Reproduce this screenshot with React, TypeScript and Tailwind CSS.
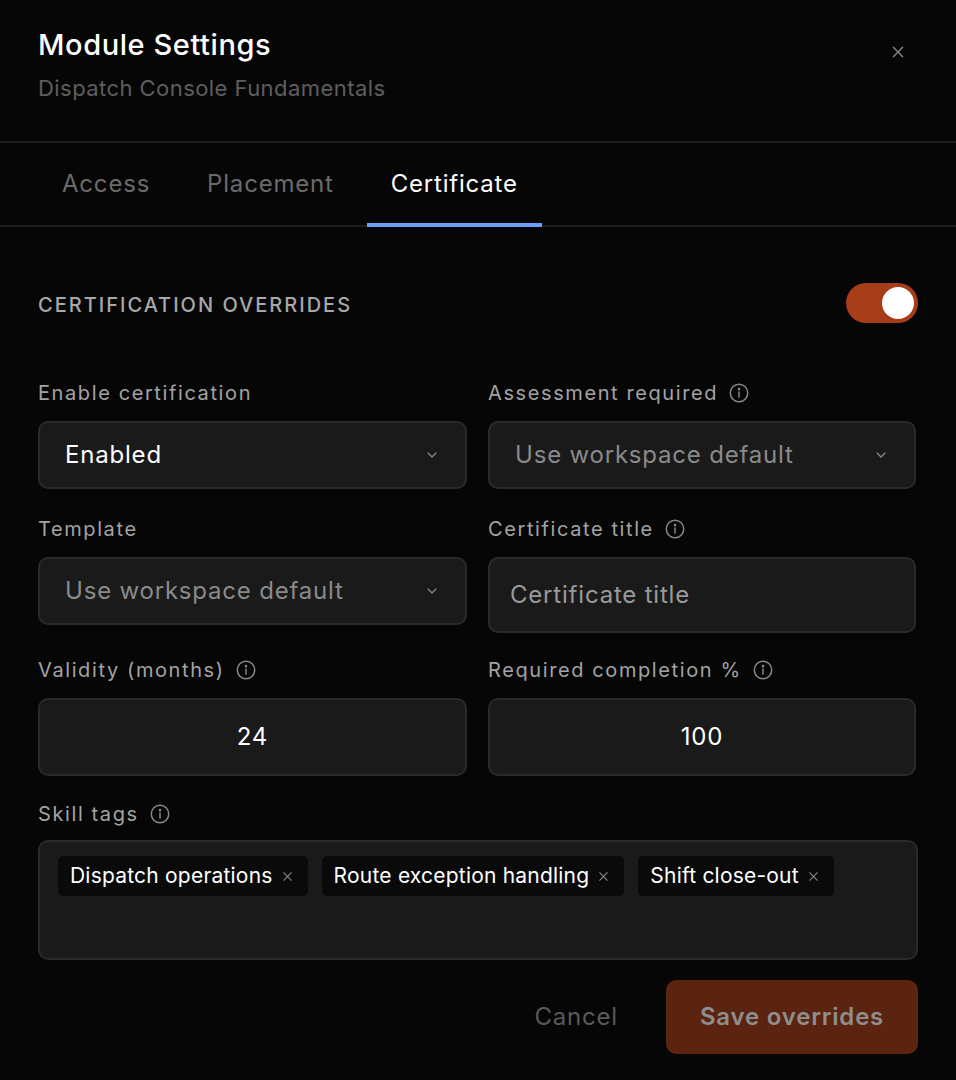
import React from "react";

const Info = () => (
  <svg width="22" height="22" viewBox="0 0 24 24" fill="none" stroke="#8a8a8a" strokeWidth="1.6" strokeLinecap="round">
    <circle cx="12" cy="12" r="9.5" />
    <line x1="12" y1="11" x2="12" y2="16.5" />
    <circle cx="12" cy="7.8" r="0.6" fill="#8a8a8a" />
  </svg>
);

const Chevron = () => (
  <svg width="16" height="16" viewBox="0 0 24 24" fill="none" stroke="#8a8a8a" strokeWidth="1.8" strokeLinecap="round" strokeLinejoin="round">
    <path d="M6 9l6 6 6-6" />
  </svg>
);

const X = ({ s = 14, c = "#8a8a8a" }: { s?: number; c?: string }) => (
  <svg width={s} height={s} viewBox="0 0 24 24" fill="none" stroke={c} strokeWidth="2" strokeLinecap="round">
    <path d="M5 5l14 14M19 5L5 19" />
  </svg>
);

const Label = ({ children, info }: { children: React.ReactNode; info?: boolean }) => (
  <div className="flex items-center gap-[10px] h-[28px] text-[20px] text-[#a3a3a3] tracking-[0.08em]">
    <span>{children}</span>
    {info && <Info />}
  </div>
);

const box = "rounded-[10px] bg-[#1a1a1a] border-2 border-[#2a2a2a] flex items-center";

export default function App() {
  return (
    <div className="w-[956px] h-[1080px] bg-[#060606] text-white overflow-hidden tracking-[0.05em]" style={{ fontFamily: "Inter, sans-serif" }}>
      <div className="flex justify-between px-[38px] pt-[26px] h-[143px] border-b-2 border-[#1c1c1c]">
        <div>
          <div className="text-[29px] font-medium leading-[38px] tracking-[0.02em]">Module Settings</div>
          <div className="text-[22px] text-[#5e5e5e] mt-[8px] tracking-[0.02em]">Dispatch Console Fundamentals</div>
        </div>
        <div className="pt-[18px] pr-[12px]"><X s={16} /></div>
      </div>
      <div className="flex px-[38px] h-[84px] border-b-2 border-[#1c1c1c]">
        <div className="px-[24px] flex items-center text-[24px] text-[#6b6b6b]">Access</div>
        <div className="px-[33px] flex items-center text-[24px] text-[#6b6b6b]">Placement</div>
        <div className="relative flex items-center px-[24px] text-[24px] text-white">
          Certificate
          <div className="absolute left-0 right-0 -bottom-[2px] h-[4px] bg-[#6b9ef5]" />
        </div>
      </div>
      <div className="px-[38px]">
        <div className="flex items-center justify-between mt-[56px] h-[40px]">
          <div className="text-[20px] tracking-[0.1em] text-[#a8a8a8] font-medium pt-[4px]">CERTIFICATION OVERRIDES</div>
          <div className="w-[72px] h-[40px] rounded-full bg-[#a63c18] flex items-center justify-end pr-[4px]">
            <div className="w-[32px] h-[32px] rounded-full bg-white" />
          </div>
        </div>
        <div className="grid grid-cols-[429px_428px] gap-x-[21px] mt-[56px]">
          <div>
            <Label>Enable certification</Label>
            <div className={`${box} h-[68px] mt-[14px] justify-between px-[25px]`}>
              <span className="text-[24px]">Enabled</span><Chevron />
            </div>
          </div>
          <div>
            <Label info>Assessment required</Label>
            <div className={`${box} h-[68px] mt-[14px] justify-between px-[25px]`}>
              <span className="text-[24px] text-[#8a8a8a]">Use workspace default</span><Chevron />
            </div>
          </div>
          <div className="mt-[26px]">
            <Label>Template</Label>
            <div className={`${box} h-[68px] mt-[14px] justify-between px-[25px]`}>
              <span className="text-[24px] text-[#8a8a8a]">Use workspace default</span><Chevron />
            </div>
          </div>
          <div className="mt-[26px]">
            <Label info>Certificate title</Label>
            <div className={`${box} h-[76px] mt-[14px] px-[20px]`}>
              <span className="text-[24px] text-[#9a9a9a]">Certificate title</span>
            </div>
          </div>
          <div className="mt-[23px]">
            <Label info>Validity (months)</Label>
            <div className={`${box} h-[78px] mt-[14px] justify-center`}>
              <span className="text-[24px]">24</span>
            </div>
          </div>
          <div className="mt-[23px]">
            <Label info>Required completion %</Label>
            <div className={`${box} h-[78px] mt-[14px] justify-center`}>
              <span className="text-[24px]">100</span>
            </div>
          </div>
        </div>
        <div className="mt-[24px]">
          <Label info>Skill tags</Label>
          <div className="rounded-[10px] bg-[#1a1a1a] border-2 border-[#2a2a2a] h-[120px] mt-[12px] p-[14px_18px] flex items-start gap-[14px]">
            {["Dispatch operations", "Route exception handling", "Shift close-out"].map((t) => (
              <div key={t} className="h-[40px] bg-[#0a0a0a] rounded-[5px] flex items-center gap-[8px] pl-[12px] pr-[14px] text-[21px] tracking-[0.01em]">
                {t}<X s={13} />
              </div>
            ))}
          </div>
        </div>
        <div className="flex justify-end items-center mt-[20px] gap-[48px]">
          <div className="text-[24px] text-[#5a5a5a]">Cancel</div>
          <div className="w-[252px] h-[74px] rounded-[10px] bg-[#5a2410] flex items-center justify-center text-[24px] font-semibold text-[#8e8e8e]">Save overrides</div>
        </div>
      </div>
    </div>
  );
}
